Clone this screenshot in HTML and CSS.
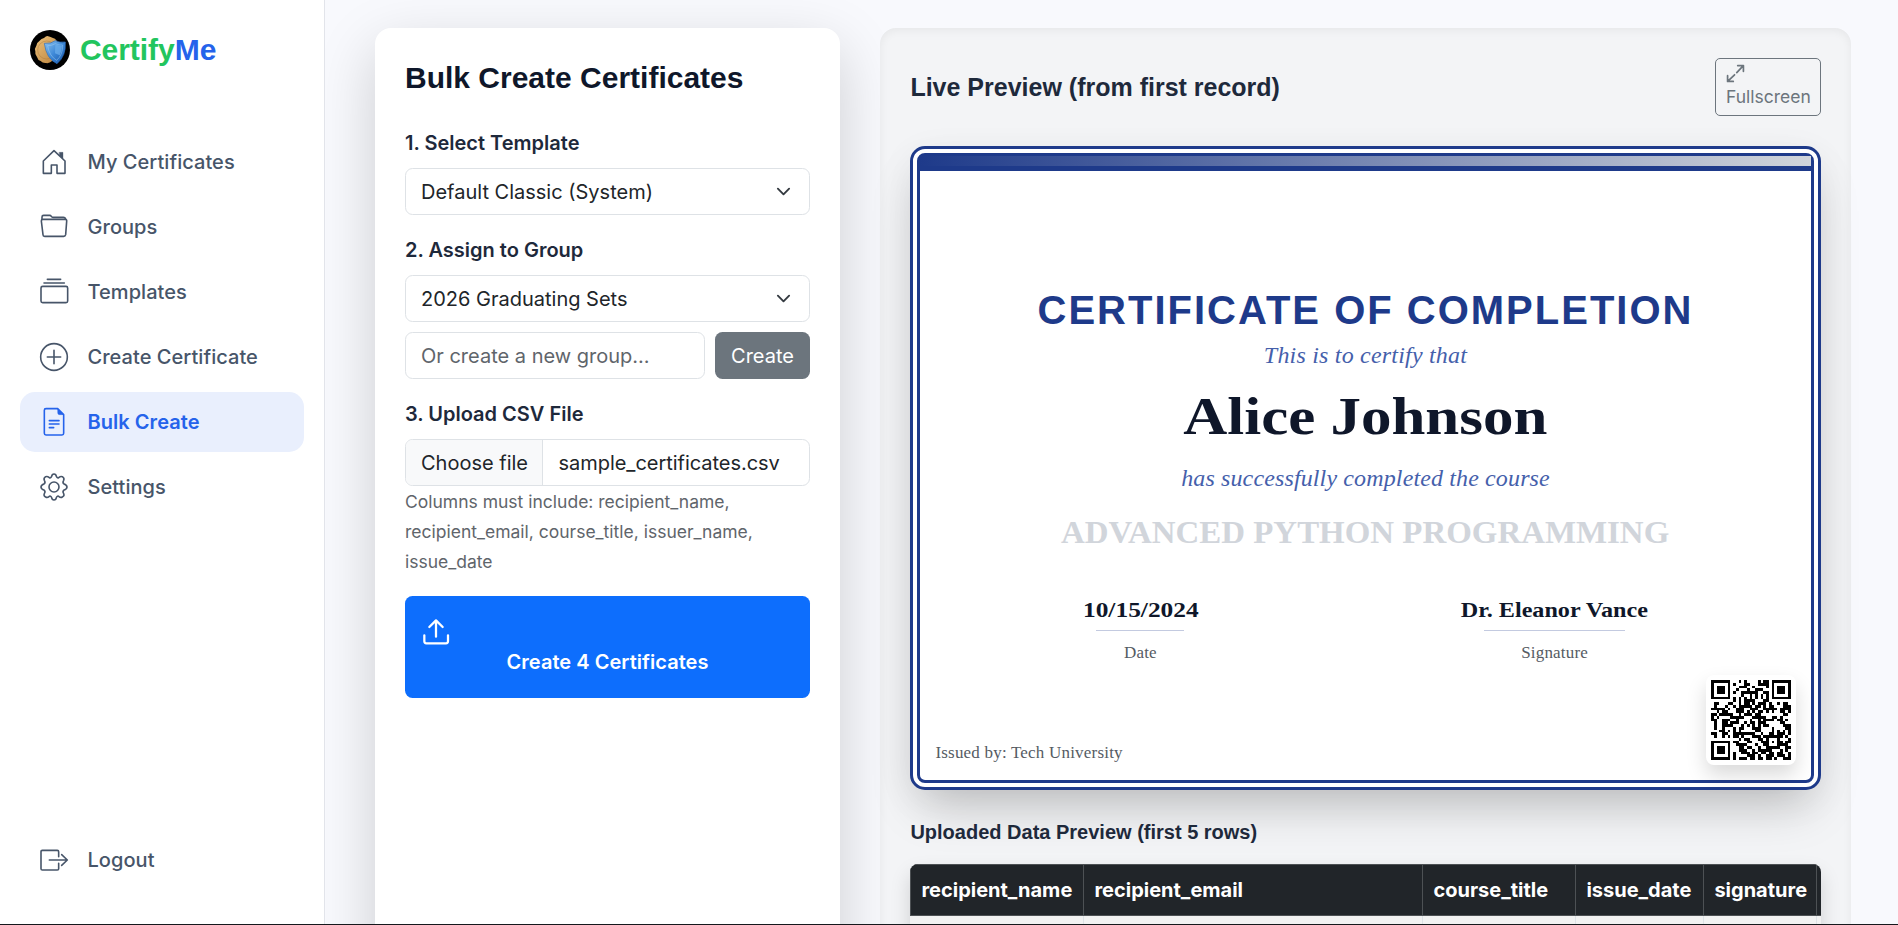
FILE: index.html
```html
<!DOCTYPE html>
<html lang="en">
<head>
<meta charset="utf-8">
<title>CertifyMe - Bulk Create</title>
<link rel="stylesheet" href="styles.css">
</head>
<body>
<div class="app">
  <aside class="sidebar">
    <div class="brand">
      <svg class="brand-mark" viewBox="0 0 120 120">
        <defs>
          <linearGradient id="gold" x1="0" y1="0" x2="1" y2="1"><stop offset="0" stop-color="#edc27c"/><stop offset="1" stop-color="#b9803a"/></linearGradient>
          <linearGradient id="shield" x1="0" y1="0" x2="1" y2="1"><stop offset="0" stop-color="#8cc4f2"/><stop offset=".5" stop-color="#3f8ad8"/><stop offset="1" stop-color="#1554a8"/></linearGradient>
        </defs>
        <circle cx="60" cy="60" r="60" fill="#000"/>
        <path d="M52 18q8 2 15 5q9 1 13 9q7 6 6 15q4 9 0 17q0 10-7 16q-4 10-13 13q-8 8-18 6q-10 1-16-6q-9-3-11-12q-7-8-5-17q-3-9 3-17q1-9 9-14q6-8 14-9q6-6 10-6z" fill="url(#gold)"/>
        <circle cx="50" cy="60" r="27" fill="none" stroke="#a87434" stroke-width="3" opacity=".4"/>
        <path d="M76 32q14 6 30 4q3 42-25 65q-32-14-38-61q20 2 33-8z" fill="url(#shield)" stroke="#2b6dc0" stroke-width="2"/>
        <path d="M76 41q11 5 22 4q1 29-18 46q-22-12-27-44q13 0 23-6z" fill="none" stroke="#a5d2f7" stroke-width="2" opacity=".7"/>
        <path d="M76 43q11 5 20 4q0 16-7 29l-14-6z" fill="#6fb0ec" opacity=".7"/>
      </svg>
      <span class="brand-name"><span class="green">Certify</span><span class="blue">Me</span></span>
    </div>
    <nav class="nav">
      <a class="nav-item"><svg class="ico" viewBox="0 0 90 90"><path d="M13 79V42L45 11L78 42V79H54V54H37V79z"/><path class="fill" d="M61 16H72V35L61 25z"/></svg><span>My Certificates</span></a>
      <a class="nav-item"><svg class="ico" viewBox="0 0 90 90"><path d="M11 22H78q6 0 5 6L80 68q-1 5-6 5H17q-5 0-5-5L7 27q0-5 4-5z"/><path d="M9 22V15q0-5 5-5H32q3 0 5 3t5 3H73q6 0 7 6"/></svg><span>Groups</span></a>
      <a class="nav-item"><svg class="ico" viewBox="0 0 90 90"><path d="M25 7H65M15 18H76"/><rect x="6" y="28" width="80" height="49" rx="5"/></svg><span>Templates</span></a>
      <a class="nav-item"><svg class="ico" viewBox="0 0 90 90"><circle cx="45" cy="45" r="40"/><path d="M25 45H65M45 25V65"/></svg><span>Create Certificate</span></a>
      <a class="nav-item active"><svg class="ico" viewBox="0 0 90 90"><path d="M56 5H21q-5 0-5 5V79q0 5 5 5H69q5 0 5-5V23z"/><path class="fill" d="M56 5L74 23H61q-5 0-5-5z"/><path d="M31 41H60M31 51H60M31 62H44"/></svg><span>Bulk Create</span></a>
      <a class="nav-item"><svg class="ico" viewBox="0 0 90 90"><path d="M38 13Q39 6 45 6Q51 6 52 13Q54 19 59 17Q65 12 70 14Q77 18 74 25Q70 31 74 35Q84 39 84 45Q84 51 74 55Q70 59 74 65Q77 72 70 75Q65 78 59 73Q54 71 52 77Q51 84 45 84Q39 84 38 77Q36 71 31 73Q25 78 20 75Q13 72 16 65Q20 59 16 55Q6 51 6 45Q6 39 16 35Q20 31 16 25Q13 18 20 14Q25 12 31 17Q36 19 38 13z"/><circle cx="45" cy="45" r="15"/></svg><span>Settings</span></a>
      <a class="nav-item logout"><svg class="ico" viewBox="0 0 90 90"><path d="M59 35V20q0-4-4-4H10q-4 0-4 4V71q0 4 4 4H55q4 0 4-4V55M31 45H85M68 29L85 45L68 61"/></svg><span>Logout</span></a>
    </nav>
  </aside>

  <main class="main">
    <section class="card">
      <h1 class="card-title">Bulk Create Certificates</h1>
      <label class="label">1. Select Template</label>
      <div class="control select"><span>Default Classic (System)</span><svg class="chev" viewBox="0 0 16 16"><path d="m2 5 6 6 6-6"/></svg></div>
      <label class="label spaced">2. Assign to Group</label>
      <div class="control select"><span>2026 Graduating Sets</span><svg class="chev" viewBox="0 0 16 16"><path d="m2 5 6 6 6-6"/></svg></div>
      <div class="new-group">
        <div class="control muted">Or create a new group...</div>
        <button class="btn-create">Create</button>
      </div>
      <label class="label spaced">3. Upload CSV File</label>
      <div class="control file"><span class="choose">Choose file</span><span class="file-name">sample_certificates.csv</span></div>
      <p class="help">Columns must include: recipient_name, recipient_email, course_title, issuer_name, issue_date</p>
      <button class="btn-submit">
        <svg class="upload" viewBox="0 0 90 90"><path d="M45 62V14M25 33L45 13L65 33M10 58V76q0 6 6 6H75q6 0 6-6V58"/></svg>
        <span>Create 4 Certificates</span>
      </button>
    </section>

    <section class="preview">
      <div class="preview-head">
        <h2 class="preview-title">Live Preview (from first record)</h2>
        <button class="btn-full">
          <svg class="expand" viewBox="0 0 60 60"><path d="M34 27L54 6M37 5H55V23M27 34L6 54M5 37V55H23"/></svg>
          <span>Fullscreen</span>
        </button>
      </div>
      <div class="cert">
        <div class="cert-inner">
          <div class="cert-bar"></div>
          <div class="cert-title">CERTIFICATE OF COMPLETION</div>
          <div class="cert-line first">This is to certify that</div>
          <div class="cert-name"><span class="wide">Alice Johnson</span></div>
          <div class="cert-line">has successfully completed the course</div>
          <div class="cert-course"><span class="wide">ADVANCED PYTHON PROGRAMMING</span></div>
          <div class="signs">
            <div class="sign date"><b><span class="wide">10/15/2024</span></b><i></i><small>Date</small></div>
            <div class="sign who"><b><span class="wide">Dr. Eleanor Vance</span></b><i></i><small>Signature</small></div>
          </div>
          <div class="cert-foot">
            <span class="issued">Issued by: Tech University</span>
            <div class="qr"><svg id="qr" viewBox="0 0 29 29" shape-rendering="crispEdges"></svg></div>
          </div>
        </div>
      </div>
      <h3 class="data-title">Uploaded Data Preview (first 5 rows)</h3>
      <div class="table">
        <div class="row head"><span>recipient_name</span><span>recipient_email</span><span>course_title</span><span>issue_date</span><span>signature</span><span></span></div>
        <div class="row body"><span></span><span></span><span></span><span></span><span></span><span></span></div>
      </div>
    </section>
  </main>
</div>
<script src="qr.js"></script>
</body>
</html>
```

FILE: styles.css
```css
* { box-sizing: border-box; }
body { margin: 0; height: 925px; overflow: hidden; background: #f8f9fd; border-bottom: 1px solid #15181c; font: 400 20px/30px Inter, sans-serif; color: #212529; }
h1, h2, h3, p { margin: 0; }
button { font: inherit; border: 0; margin: 0; }

.app { display: flex; height: 924px; overflow: hidden; }
.sidebar { width: 325px; flex: none; background: #fff; border-right: 1px solid #e2e4ea; display: flex; flex-direction: column; padding: 30px 20px 34px; position: relative; }
.brand { display: flex; align-items: center; gap: 10px; height: 40px; padding-left: 10px; margin-bottom: 62px; }
.brand-mark { width: 40px; height: 40px; }
.brand-name { font: 700 30px/40px "Liberation Sans", Arial, sans-serif; letter-spacing: -.05px; }
.green { color: #22c55e; }
.blue { color: #2563eb; }
.nav { display: flex; flex-direction: column; gap: 5px; flex: 1; }
.nav-item { display: flex; align-items: center; gap: 18.8px; height: 60px; padding-left: 18.7px; border-radius: 15px; color: #475569; font-weight: 500; letter-spacing: .05px; }
.nav-item.active { background: #e9effd; color: #2563eb; font-weight: 600; }
.logout { margin-top: auto; }
.ico { width: 30px; height: 30px; fill: none; stroke: currentColor; stroke-width: 4.8; stroke-linejoin: round; stroke-linecap: round; }
.ico .fill { fill: currentColor; stroke-width: 1; }

.main { flex: 1; display: flex; align-items: flex-start; gap: 40.4px; padding: 28px 47.4px 0 50px; }
.card { width: 465px; height: 1000px; flex: none; padding: 30px; background: #fff; border-radius: 16px; box-shadow: 0 20px 60px rgba(0, 0, 0, .175); }
.card-title { font: 700 30px/40px "Liberation Sans", Arial, sans-serif; color: #0f172a; margin-bottom: 30px; }
.label { display: block; font-weight: 600; color: #1e293b; margin-bottom: 10px; }
.label.spaced { margin-top: 20px; }
.control { display: flex; align-items: center; height: 47px; padding: 0 15px; border: 1px solid #dee2e6; border-radius: 7.5px; background: #fff; }
.select { justify-content: space-between; padding-right: 18px; }
.chev { width: 15px; height: 15px; fill: none; stroke: #343a40; stroke-width: 2; stroke-linecap: round; stroke-linejoin: round; }
.new-group { display: flex; gap: 10px; margin-top: 10px; }
.new-group .control { flex: 1; }
.muted { color: #5f656b; }
.btn-create { width: 95px; height: 47px; padding: 0; border-radius: 7.5px; background: #6c757d; color: #fff; }
.file { padding: 0; overflow: hidden; }
.choose { height: 45px; line-height: 46px; padding: 0 14px 0 15px; background: #f8f9fa; border-right: 1px solid #dee2e6; }
.file-name { padding-left: 15.5px; letter-spacing: -.04px; }
.help { font-size: 17.5px; line-height: 30px; color: #5f656b; margin: 1px 0 19px; }
.btn-submit { display: flex; flex-direction: column; width: 100%; height: 102px; padding: 20px 16px 0; border-radius: 7.5px; background: #0d6efd; color: #fff; font-weight: 600; }
.upload { width: 30px; height: 30px; fill: none; stroke: #fff; stroke-width: 6.8; stroke-linecap: round; stroke-linejoin: round; }
.btn-submit span { align-self: center; margin-top: 1px; letter-spacing: .04px; }

.preview { flex: 1; height: 1000px; padding: 30px; background: #f3f4f6; border-radius: 16px; box-shadow: inset 0 2px 10px rgba(0, 0, 0, .06); }
.preview-head { display: flex; align-items: center; justify-content: space-between; margin-bottom: 30px; }
.preview-title { font: 700 25px/30px "Liberation Sans", Arial, sans-serif; color: #1e293b; }
.btn-full { display: flex; flex-direction: column; width: 106px; height: 58px; padding: 5px 0 0 10.4px; border: 1px solid #6c757d; border-radius: 5px; background: transparent; color: #6c757d; font-size: 17.5px; line-height: 26px; align-items: flex-start; }
.expand { width: 19px; height: 19px; margin-bottom: 1px; fill: none; stroke: currentColor; stroke-width: 5.4; stroke-linejoin: round; stroke-linecap: round; }

.cert { height: 644px; border: 3px solid #1e3a8a; padding: 4px; border-radius: 15px; background: #fff; box-shadow: 0 25px 50px -12px rgba(0, 0, 0, .22), 0 10px 40px rgba(0, 0, 0, .05); font-family: Georgia, "Liberation Serif", serif; white-space: nowrap; }
.cert-inner { height: 630px; border: 3px solid #1e3a8a; border-radius: 8px; display: flex; flex-direction: column; align-items: center; }
.cert-bar { align-self: stretch; height: 15px; background: linear-gradient(90deg, #1e3a8a, #d1d5db); border-bottom: 5px solid #1e3a8a; }
.cert-title { font: 700 40px/48px "Liberation Sans", Arial, sans-serif; letter-spacing: 2px; color: #1e3a8a; margin-top: 115px; }
.cert-line { font-size: 24px; line-height: 36px; font-style: italic; color: #4560ab; letter-spacing: .13px; }
.cert-line.first { margin-top: 3px; letter-spacing: .2px; }
.wide { display: inline-block; transform: scaleX(1.15); }
.cert-name { font-size: 53px; font-weight: 700; line-height: 60px; color: #0f172a; margin: 13px 0 14px; }
.cert-course { font-size: 31.5px; font-weight: 700; line-height: 40px; color: #d1d5db; margin-top: 17px; }
.cert-course .wide { transform: scaleX(1.045); }
.signs { align-self: stretch; display: flex; justify-content: space-between; padding: 0 162px; margin-top: 42px; }
.sign { display: flex; flex-direction: column; align-items: center; }
.sign b { font-size: 21px; line-height: 30px; color: #0f172a; }
.sign i { height: 1px; background: #c3cae0; margin: 5px 0 10px; }
.sign small { font-size: 17px; line-height: 24px; color: #555b63; letter-spacing: .2px; }
.date { width: 116px; }
.date .wide { transform: scaleX(1.21); }
.date i { width: 88px; }
.who { width: 188px; }
.who i { width: 141px; }
.cert-foot { align-self: stretch; display: flex; justify-content: space-between; align-items: flex-end; margin-top: auto; padding: 0 15px 15px 15px; }
.issued { font-size: 17px; line-height: 24px; color: #555b63; letter-spacing: .2px; }
.qr { width: 90px; height: 90px; padding: 5px; background: #fff; border-radius: 8px; box-shadow: 0 10px 20px rgba(0, 0, 0, .15); }
.qr svg { display: block; width: 80px; height: 80px; }

.data-title { font: 700 20px/24px "Liberation Sans", Arial, sans-serif; color: #1e293b; margin: 30px 0 20px; }
.table { border-radius: 8px; overflow: hidden; box-shadow: 0 10px 20px rgba(0, 0, 0, .15); }
.row { display: grid; grid-template-columns: 173px 339px 153px 128px 113px 1fr; }
.row span { border-right: 1px solid #dee2e6; }
.head { height: 52px; background: #212529; border: 1px solid #4d5154; border-right: 0; color: #fff; font-weight: 700; line-height: 50px; }
.head span { border-color: #4d5154; padding-left: 10px; }
.head span:last-child, .body span:last-child { border: 0; padding: 0; }
.body { height: 50px; background: #f2f2f2; padding-left: 1px; }
```

FILE: qr.js
```js
const SIZE = 29;
const svg = document.getElementById('qr');
const finder = (x, y) => `M${x} ${y}h7v7h-7zm1 1v5h5v-5zm1 1h3v3h-3z`;

const inFinder = (x, y) => (x < 8 && y < 8) || (x > 20 && y < 8) || (x < 8 && y > 20);
const alignment = (x, y) => {
  const d = Math.max(Math.abs(x - 22), Math.abs(y - 22));
  return d > 2 ? null : d !== 1;
};

let seed = 20241015;
const bit = () => {
  seed = (seed * 1103515245 + 12345) % 2147483648;
  return seed / 2147483648 < 0.5;
};

let d = finder(0, 0) + finder(22, 0) + finder(0, 22);
for (let y = 0; y < SIZE; y++) {
  for (let x = 0; x < SIZE; x++) {
    let on = bit();
    if (inFinder(x, y)) continue;
    if (x === 6) on = y % 2 === 0;
    else if (y === 6) on = x % 2 === 0;
    else if (alignment(x, y) !== null) on = alignment(x, y);
    if (on) d += `M${x} ${y}h1v1h-1z`;
  }
}
svg.innerHTML = `<path fill="#000" fill-rule="evenodd" d="${d}"/>`;
```
